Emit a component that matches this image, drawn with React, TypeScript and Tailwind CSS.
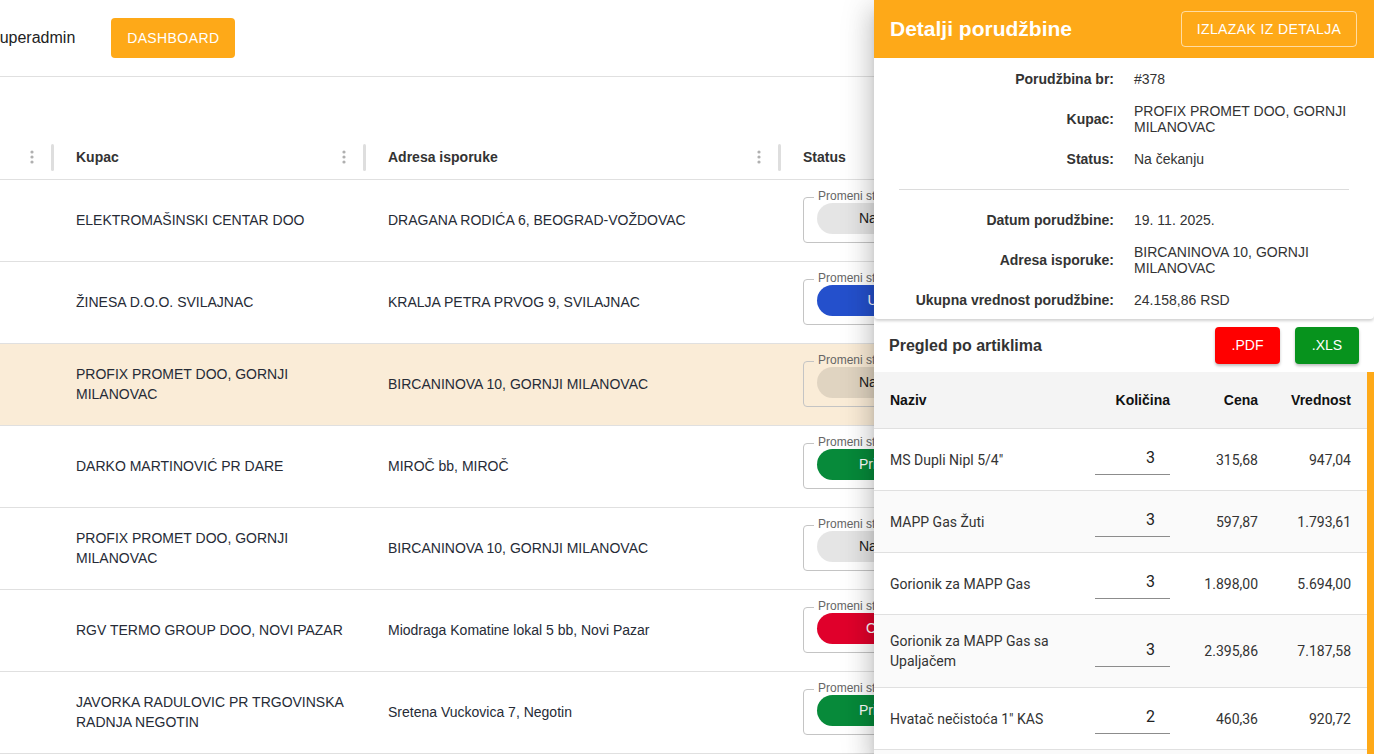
import React from 'react';

type Order = {
  kupac: string;
  adresa: string;
  status: 'cekanje' | 'obrada' | 'prihvaceno' | 'odbijeno';
  active?: boolean;
};

type Item = { naziv: string; kolicina: number; cena: string; vrednost: string };

const orders: Order[] = [
  { kupac: 'ELEKTROMAŠINSKI CENTAR DOO', adresa: 'DRAGANA RODIĆA 6, BEOGRAD-VOŽDOVAC', status: 'cekanje' },
  { kupac: 'ŽINESA D.O.O. SVILAJNAC', adresa: 'KRALJA PETRA PRVOG 9, SVILAJNAC', status: 'obrada' },
  { kupac: 'PROFIX PROMET DOO, GORNJI MILANOVAC', adresa: 'BIRCANINOVA 10, GORNJI MILANOVAC', status: 'cekanje', active: true },
  { kupac: 'DARKO MARTINOVIĆ PR DARE', adresa: 'MIROČ bb, MIROČ', status: 'prihvaceno' },
  { kupac: 'PROFIX PROMET DOO, GORNJI MILANOVAC', adresa: 'BIRCANINOVA 10, GORNJI MILANOVAC', status: 'cekanje' },
  { kupac: 'RGV TERMO GROUP DOO, NOVI PAZAR', adresa: 'Miodraga Komatine lokal 5 bb, Novi Pazar', status: 'odbijeno' },
  { kupac: 'JAVORKA RADULOVIC PR TRGOVINSKA RADNJA NEGOTIN', adresa: 'Sretena Vuckovica 7, Negotin', status: 'prihvaceno' },
];

const items: Item[] = [
  { naziv: 'MS Dupli Nipl 5/4"', kolicina: 3, cena: '315,68', vrednost: '947,04' },
  { naziv: 'MAPP Gas Žuti', kolicina: 3, cena: '597,87', vrednost: '1.793,61' },
  { naziv: 'Gorionik za MAPP Gas', kolicina: 3, cena: '1.898,00', vrednost: '5.694,00' },
  { naziv: 'Gorionik za MAPP Gas sa Upaljačem', kolicina: 3, cena: '2.395,86', vrednost: '7.187,58' },
  { naziv: 'Hvatač nečistoća 1" KAS', kolicina: 2, cena: '460,36', vrednost: '920,72' },
  { naziv: 'Ventil kuglasti 1/2" MM', kolicina: 7, cena: '1.087,99', vrednost: '7.615,91' },
];

const chips = {
  cekanje: { label: 'Na čekanju', cls: 'bg-black/[0.1] text-[#222]' },
  obrada: { label: 'U obradi', cls: 'bg-[#2450cc] text-white' },
  prihvaceno: { label: 'Prihvaćeno', cls: 'bg-[#078a3a] text-white' },
  odbijeno: { label: 'Odbijeno', cls: 'bg-[#e0002b] text-white' },
};

const Kebab = () => (
  <svg width="4" height="14" viewBox="0 0 4 14" className="fill-[#b0b0b0]">
    <circle cx="2" cy="2" r="1.6" />
    <circle cx="2" cy="7" r="1.6" />
    <circle cx="2" cy="12" r="1.6" />
  </svg>
);

const HeaderCell = ({ title, width }: { title: string; width: string }) => (
  <div className={`${width} shrink-0 flex items-center h-full`}>
    <span className="pl-[22px] flex-1 font-bold text-[#333]">{title}</span>
    <span className="mr-[17px]"><Kebab /></span>
    <span className="w-[3px] h-[27px] rounded-sm bg-[#dedede]" />
  </div>
);

const StatusField = ({ order }: { order: Order }) => {
  const chip = chips[order.status];
  return (
    <div className="relative mt-[17px] ml-[22px] w-[180px] h-[46px] border border-[#c4c4c4] rounded-[4px]">
      <span
        className={`absolute -top-[9px] left-[10px] px-[4px] text-[12px] leading-[14px] text-[#666] ${
          order.active ? 'bg-[#faecd7]' : 'bg-white'
        }`}
      >
        Promeni status
      </span>
      <div className={`mt-[5px] ml-[13px] h-[31px] w-[154px] rounded-full flex items-center justify-center text-[14px] ${chip.cls}`}>
        {chip.label}
      </div>
    </div>
  );
};

const DetailRow = ({ label, value }: { label: string; value: string }) => (
  <>
    <div className="text-right font-bold text-[#333] self-center">{label}</div>
    <div className="text-[#333] self-center pr-5">{value}</div>
  </>
);

const OrderDrawer = () => (
  <aside className="absolute top-0 right-0 w-[500px] h-screen bg-white flex flex-col overflow-hidden shadow-[0_8px_10px_-5px_rgba(0,0,0,0.2),0_16px_24px_2px_rgba(0,0,0,0.14),0_6px_30px_5px_rgba(0,0,0,0.12)]">
    <div className="h-[58px] shrink-0 bg-[#fea918] flex items-center justify-between pl-4 pr-[17px]">
      <h2 className="text-[21px] font-bold text-white">Detalji porudžbine</h2>
      <button className="h-[36px] w-[176px] border border-white/60 rounded-[4px] text-white text-[14px] tracking-[0.4px]">
        IZLAZAK IZ DETALJA
      </button>
    </div>

    {/* order summary */}
    <div className="shrink-0 pt-[13px] pb-[11px] rounded-b-[4px] shadow-[0_2px_3px_rgba(0,0,0,0.18)] text-[14px] leading-[16px]">
      <div className="grid grid-cols-[240px_1fr] gap-x-5 gap-y-4">
        <DetailRow label="Porudžbina br:" value="#378" />
        <DetailRow label="Kupac:" value="PROFIX PROMET DOO, GORNJI MILANOVAC" />
        <DetailRow label="Status:" value="Na čekanju" />
      </div>
      <div className="mx-[25px] my-[22px] h-px bg-[#dcdcdc]" />
      <div className="grid grid-cols-[240px_1fr] gap-x-5 gap-y-4">
        <DetailRow label="Datum porudžbine:" value="19. 11. 2025." />
        <DetailRow label="Adresa isporuke:" value="BIRCANINOVA 10, GORNJI MILANOVAC" />
        <DetailRow label="Ukupna vrednost porudžbine:" value="24.158,86 RSD" />
      </div>
    </div>

    <div className="h-[53px] shrink-0 flex items-center pl-[15px] pr-[15px] gap-[15px]">
      <h3 className="flex-1 text-[16px] font-bold text-[#333]">Pregled po artiklima</h3>
      <button className="h-[37px] w-[65px] rounded-[4px] bg-[#ff0000] text-white text-[14px] shadow-[0_2px_3px_rgba(0,0,0,0.25)]">.PDF</button>
      <button className="h-[37px] w-[64px] rounded-[4px] bg-[#07931d] text-white text-[14px] shadow-[0_2px_3px_rgba(0,0,0,0.25)]">.XLS</button>
    </div>

    <div className="flex-1 flex min-h-0">
      <div className="flex-1 text-[14px]">
        <div className="grid grid-cols-[1fr_90px_88px_93px] px-4 h-[57px] items-center bg-[#f4f4f4] border-b border-[#e0e0e0] font-bold text-[#111]">
          <span>Naziv</span>
          <span className="text-right">Količina</span>
          <span className="text-right">Cena</span>
          <span className="text-right">Vrednost</span>
        </div>
        {items.map((it, i) => (
          <div
            key={i}
            className={`grid grid-cols-[1fr_90px_88px_93px] px-4 py-[15px] items-center border-b border-[#e0e0e0] font-['Roboto',sans-serif] text-[#333] leading-[20px] ${
              i % 2 === 1 ? 'bg-[#fafafa]' : 'bg-white'
            }`}
          >
            <span className="pr-4 py-px">{it.naziv}</span>
            <div className="flex justify-end">
              <div className="w-[75px] h-[31px] border-b border-[#8c8c8c] flex items-start justify-end pr-[15px] pt-[4px] text-[16px] text-[#222]">
                {it.kolicina}
              </div>
            </div>
            <span className="text-right">{it.cena}</span>
            <span className="text-right">{it.vrednost}</span>
          </div>
        ))}
      </div>
      <div className="w-[7px] bg-[#fea918]" />
    </div>
  </aside>
);

export default function App() {
  return (
    <div className="relative min-h-screen overflow-hidden bg-white font-['Liberation_Sans',Arial,sans-serif] text-[14px]">
      <header className="h-[77px] flex items-center border-b border-[#e0e0e0]">
        <span className="-ml-[11px] text-[16px] text-[#222]">Superadmin</span>
        <button className="ml-[36px] h-[40px] w-[124px] rounded-[4px] bg-[#fea918] text-white text-[14px] tracking-[0.4px]">
          DASHBOARD
        </button>
      </header>

      <main className="pt-[58px]">
        <div className="flex h-[45px] border-b border-[#e0e0e0] w-[1300px]">
          <div className="w-[54px] shrink-0 flex items-center justify-end h-full">
            <span className="mr-[17px]"><Kebab /></span>
            <span className="w-[3px] h-[27px] rounded-sm bg-[#dedede]" />
          </div>
          <HeaderCell title="Kupac" width="w-[312px]" />
          <HeaderCell title="Adresa isporuke" width="w-[415px]" />
          <div className="flex items-center pl-[22px] font-bold text-[#333]">Status</div>
        </div>

        {orders.map((o, i) => (
          <div
            key={i}
            className={`flex h-[82px] border-b border-[#e0e0e0] text-[#262b36] ${o.active ? 'bg-[#faecd7]' : 'bg-white'}`}
          >
            <div className="w-[54px] shrink-0" />
            <div className="w-[312px] shrink-0 pl-[22px] pr-4 flex items-center leading-[20px] pb-[2px]">{o.kupac}</div>
            <div className="w-[415px] shrink-0 pl-[22px] pr-4 flex items-center leading-[20px] pb-[2px]">{o.adresa}</div>
            <div className="shrink-0">
              <StatusField order={o} />
            </div>
          </div>
        ))}
      </main>

      <OrderDrawer />
    </div>
  );
}
